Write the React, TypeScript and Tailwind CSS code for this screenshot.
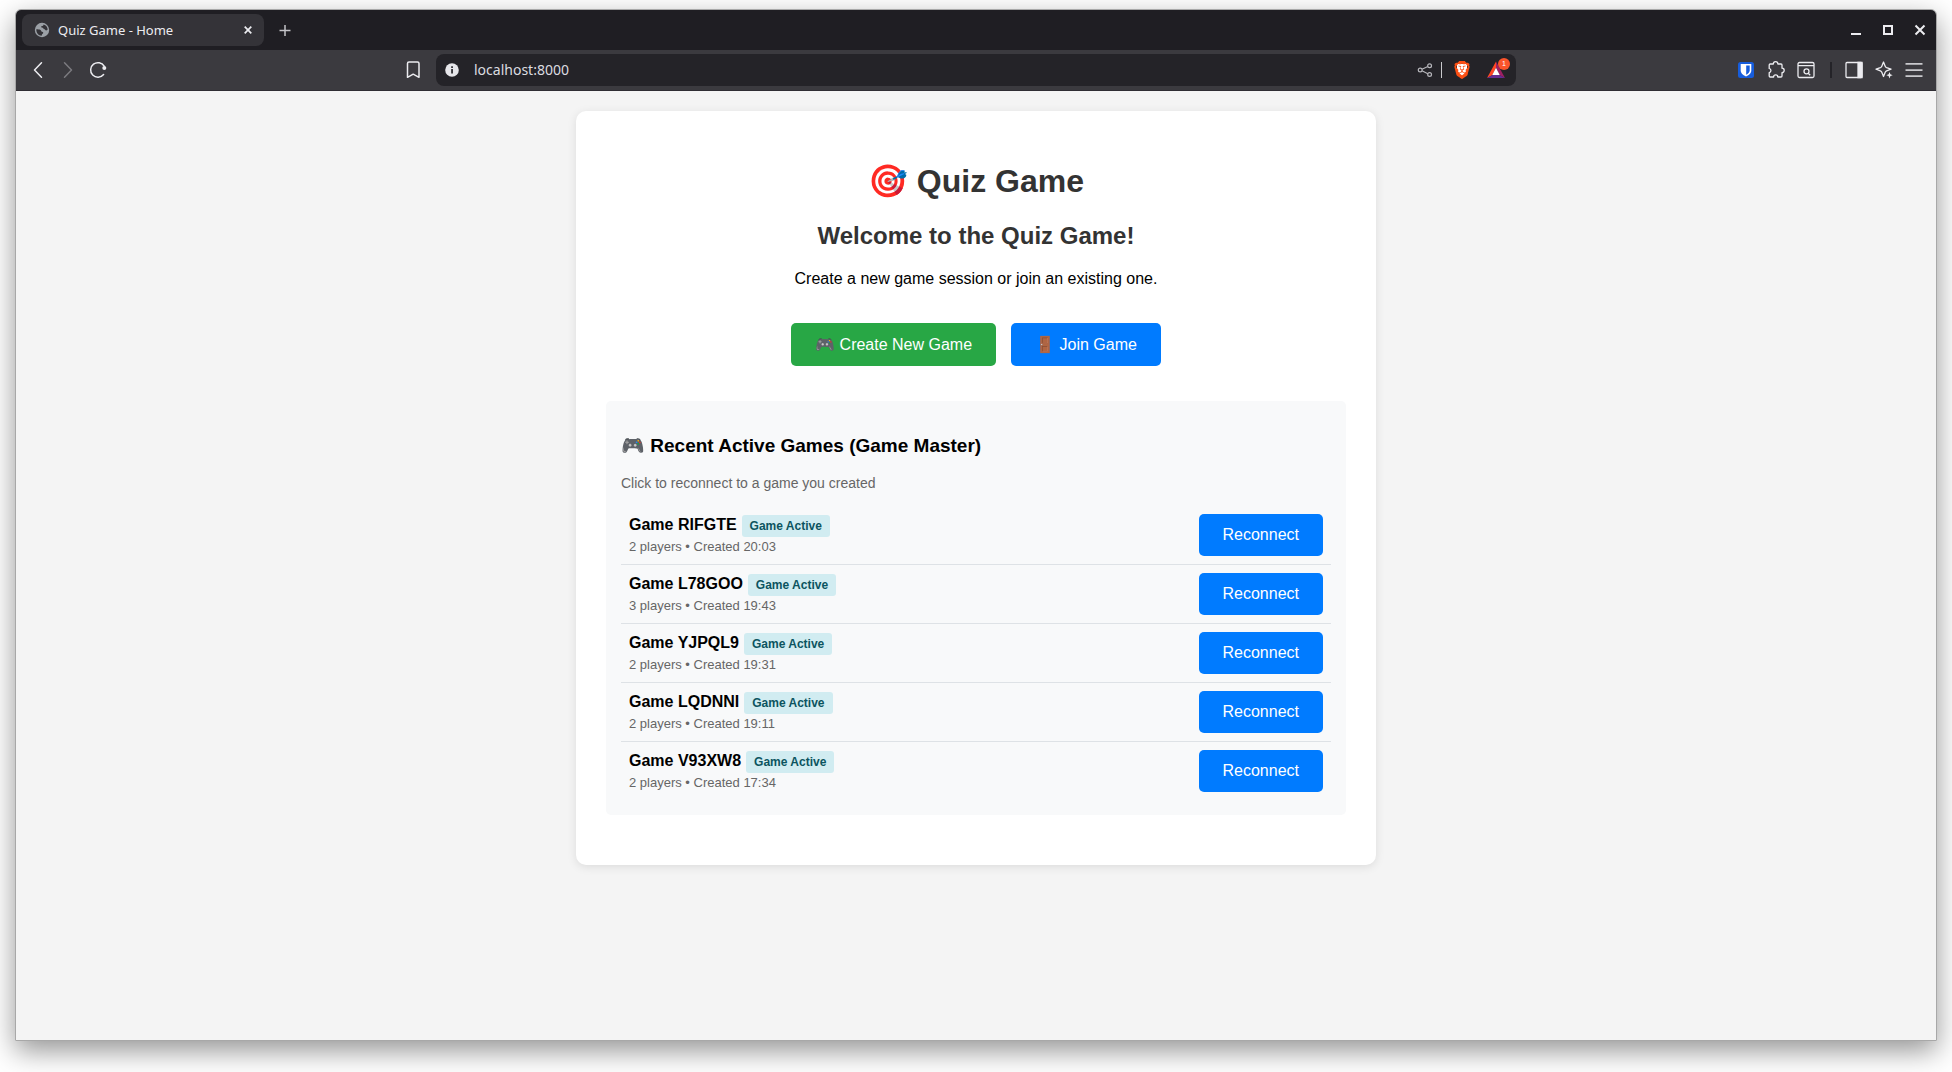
import type { ReactNode } from "react";
import { SiBrave } from "react-icons/si";

const games = [
  { code: "RIFGTE", players: 2, created: "20:03" },
  { code: "L78GOO", players: 3, created: "19:43" },
  { code: "YJPQL9", players: 2, created: "19:31" },
  { code: "LQDNNI", players: 2, created: "19:11" },
  { code: "V93XW8", players: 2, created: "17:34" },
];

function IconButton({ label, children, className = "" }: { label: string; children: ReactNode; className?: string }) {
  return (
    <button type="button" aria-label={label} className={`flex shrink-0 items-center justify-center ${className}`}>
      {children}
    </button>
  );
}

function TabStrip() {
  return (
    <div className="flex h-10 items-center bg-[#1f1e23] px-1.5">
      <div className="flex h-8 w-[242px] items-center rounded-lg bg-[#343338] pr-2 pl-3">
        <svg width="16" height="16" viewBox="0 0 16 16" className="shrink-0">
          <circle cx="8" cy="8" r="7.2" fill="#9ba0a6" />
          <path d="M2.300 7.300c1.700 0 3.200.1 4.200.7.900.6.500 1.500 1.500 1.800 1 .2 1.500.8 1.100 1.500-.4.600-1.300.8-1.400 2.400-3 0-5.500-2.500-5.400-6.400zM9.600 2.400c-.2 1.100-.8 1.400-1.700 1.500-.9.200-.9 1.500.1 1.700 1.100.1 1.100 1.100 2 1.500 1 .4 1.300 1.300 2.200 1.300.8 0 1.100-.4 1.500-.8-.2-2.600-1.700-4.600-4.100-5.200z" fill="#343338" />
        </svg>
        <span className="ml-2 flex-1 truncate font-['Noto_Sans',sans-serif] text-[13px] leading-5 text-[#ececf0]">Quiz Game - Home</span>
        <IconButton label="Close tab" className="size-4 text-[#ececf0]">
          <svg width="16" height="16" viewBox="0 0 16 16" stroke="currentColor" strokeWidth="1.700">
            <path d="M4.700 4.700l6.600 6.600M11.300 4.700l-6.600 6.600" />
          </svg>
        </IconButton>
      </div>
      <IconButton label="New tab" className="ml-3 size-4 text-[#c4c4c8]">
        <svg width="16" height="16" viewBox="0 0 16 16" stroke="currentColor" strokeWidth="1.500">
          <path d="M9 3v11M3.500 8.500h11" />
        </svg>
      </IconButton>
      <div className="ml-auto flex items-center gap-4 pr-0.5 text-[#ececf0]">
        <IconButton label="Minimize" className="size-4">
          <svg width="16" height="16" viewBox="0 0 16 16" fill="currentColor"><path d="M3 11h10v2H3z" /></svg>
        </IconButton>
        <IconButton label="Maximize" className="size-4">
          <svg width="16" height="16" viewBox="0 0 16 16" fill="none" stroke="currentColor" strokeWidth="2"><path d="M4 4h8v8H4z" /></svg>
        </IconButton>
        <IconButton label="Close window" className="size-4">
          <svg width="16" height="16" viewBox="0 0 16 16" stroke="currentColor" strokeWidth="2"><path d="M3.500 3.500l9 9M12.500 3.500l-9 9" /></svg>
        </IconButton>
      </div>
    </div>
  );
}

function Toolbar() {
  return (
    <div className="flex h-[41px] items-center border-b border-[#2f2d33] bg-[#3b3a3f] pr-3 pl-3">
      <div className="flex flex-1 items-center">
        <div className="flex gap-2.5 text-[#ececf0]">
          <IconButton label="Back" className="size-5">
            <svg width="20" height="20" viewBox="0 0 20 20" fill="none" stroke="currentColor" strokeWidth="1.500" strokeLinecap="round" strokeLinejoin="round"><path d="M13.500 2.800L6.500 10l7 7.200" /></svg>
          </IconButton>
          <IconButton label="Forward" className="size-5 text-[#7b7a7f]">
            <svg width="20" height="20" viewBox="0 0 20 20" fill="none" stroke="currentColor" strokeWidth="1.500" strokeLinecap="round" strokeLinejoin="round"><path d="M6.500 2.800l7 7.200-7 7.200" /></svg>
          </IconButton>
          <IconButton label="Reload" className="size-5">
            <svg width="20" height="20" viewBox="0 0 20 20" fill="none" stroke="currentColor" strokeWidth="1.500" strokeLinecap="round"><path d="M15.600 14.600A7.300 7.300 0 1 1 16.200 6.200" /><circle cx="16.300" cy="8" r="2" fill="currentColor" stroke="none" /></svg>
          </IconButton>
        </div>
        <IconButton label="Bookmark this page" className="mr-3 ml-auto size-5 text-[#ececf0]">
          <svg width="20" height="20" viewBox="0 0 20 20" fill="none" stroke="currentColor" strokeWidth="1.500" strokeLinejoin="round"><path d="M5 2h8.500q1.500 0 1.500 1.500V17.300L9.200 14.200 3.500 17.300V3.500Q3.500 2 5 2z" /></svg>
        </IconButton>
      </div>
      <div className="flex h-8 w-[1080px] max-w-[60%] items-center rounded-lg bg-[#242328] pr-2.5 pl-2">
        <IconButton label="Site information" className="size-4">
          <svg width="16" height="16" viewBox="0 0 16 16"><circle cx="8" cy="8" r="6.800" fill="#e6e6ea" /><path d="M7.200 7h1.700v4.500H7.200zM7.200 4.300h1.700v1.600H7.200z" fill="#242328" /></svg>
        </IconButton>
        <input aria-label="Address" defaultValue="localhost:8000" className="ml-3.5 min-w-0 flex-1 bg-transparent font-['Noto_Sans',sans-serif] text-sm text-[#dcdce0] outline-none" />
        <IconButton label="Share" className="size-4 text-[#b5b5ba]">
          <svg width="16" height="16" viewBox="0 0 16 16" fill="none" stroke="currentColor" strokeWidth="1.200"><circle cx="3.200" cy="8" r="1.900" /><circle cx="12.600" cy="3.700" r="1.900" /><circle cx="12.600" cy="12.500" r="1.900" /><path d="M5 7.200l5.800-2.700M5 8.800l5.800 2.900" /></svg>
        </IconButton>
        <div className="ml-2 h-4 w-px bg-[#c9c9cd]" />
        <IconButton label="Brave Shields" className="relative ml-2.5 size-5">
          <span className="absolute h-3 w-2.5 rounded-b-full bg-white" />
          <SiBrave className="relative size-[18px] text-[#fb4f14]" />
        </IconButton>
        <IconButton label="Brave Rewards" className="relative ml-3.5 size-5">
          <svg width="20" height="20" viewBox="0 0 20 20">
            <path d="M10 1.500L1 18l5.500-3L10 7.800z" fill="#ff4724" />
            <path d="M10 1.500L19 18l-5.500-3L10 7.800z" fill="#9e1f63" />
            <path d="M1 18h18l-5.500-3h-7z" fill="#662d91" />
            <path d="M10 7.800L13.700 15H6.300z" fill="#fff" />
          </svg>
          <span className="absolute -top-0.5 -right-1 flex size-3 items-center justify-center rounded-full bg-[#fb542b] text-[7px] text-white">1</span>
        </IconButton>
      </div>
      <div className="flex flex-1 items-center justify-end text-[#ececf0]">
        <IconButton label="Bitwarden" className="size-4">
          <svg width="16" height="16" viewBox="0 0 16 16"><rect width="16" height="16" rx="2.500" fill="#175ddc" /><path d="M2.700 2h10.600v6.500c0 3-3 4.900-5.300 5.900-2.300-1-5.300-2.900-5.300-5.900z" fill="#fff" /><path d="M8.200 3.500h3.500v5c0 1.900-1.900 3.300-3.500 4.200z" fill="#175ddc" /></svg>
        </IconButton>
        <IconButton label="Extensions" className="ml-3 size-5">
          <svg width="20" height="20" viewBox="0 0 20 20" fill="none" stroke="currentColor" strokeWidth="1.300" strokeLinejoin="round"><path d="M7.300 4a2.300 2.300 0 0 1 4.600 0H15q1 0 1 1v3.200a2.200 2.200 0 0 1 0 4.400V16q0 1-1 1h-3.200a2.100 2.100 0 0 0-4.200 0H4.200q-1 0-1-1v-3.300a2.200 2.200 0 0 0 0-4.300V5q0-1 1-1z" /></svg>
        </IconButton>
        <IconButton label="Search tabs" className="ml-2.5 size-5">
          <svg width="20" height="20" viewBox="0 0 20 20" fill="none" stroke="currentColor" strokeWidth="1.300"><rect x="2" y="2.500" width="16" height="15" rx="1.500" /><path d="M2 5.700h16M12.200 13.200l2 2" /><circle cx="10.500" cy="11.300" r="2.500" /></svg>
        </IconButton>
        <div className="ml-3.5 h-4 w-0.5 bg-[#242328]" />
        <IconButton label="Side panel" className="ml-3 size-5">
          <svg width="20" height="20" viewBox="0 0 20 20" fill="none" stroke="currentColor" strokeWidth="1.300"><rect x="2" y="2.500" width="16" height="15" rx="1" /><path d="M14 2.500h4v15h-4z" fill="currentColor" /></svg>
        </IconButton>
        <IconButton label="Leo AI" className="ml-2.5 size-5">
          <svg width="20" height="20" viewBox="0 0 20 20" fill="none" stroke="currentColor" strokeWidth="1.300" strokeLinejoin="round"><path d="M9.500 2l1.700 4.200q.4 1 1.400 1.400L17 9.200l-4.400 1.600q-1 .4-1.400 1.400L9.500 16.500l-1.700-4.300q-.4-1-1.400-1.400L2 9.200l4.400-1.600q1-.4 1.400-1.400z" /><circle cx="15.500" cy="15.200" r="3.200" fill="#3b3a3f" stroke="none" /><path d="M15.500 12l.9 2.300 2.300.9-2.300.9-.9 2.300-.9-2.300-2.300-.9 2.300-.9z" fill="currentColor" stroke="none" /></svg>
        </IconButton>
        <IconButton label="Menu" className="ml-2.5 size-5 text-[#c9c9cd]">
          <svg width="20" height="20" viewBox="0 0 20 20" fill="currentColor"><path d="M1.500 3h17v1.700h-17zM1.500 9.200h17v1.700h-17zM1.500 15.300h17V17h-17z" /></svg>
        </IconButton>
      </div>
    </div>
  );
}

export default function App() {
  return (
    <div className="flex min-h-screen bg-white px-[15px] pt-[9px] pb-[31px] font-['Liberation_Sans',Arial,sans-serif]">
      <div className="flex flex-1 flex-col overflow-hidden rounded-t-md border border-[#a8a8a8] shadow-[0_10px_28px_rgba(0,0,0,0.42)]">
        <TabStrip />
        <Toolbar />
        <main className="flex-1 bg-[#f4f4f4] px-5 py-5">
          <div className="mx-auto max-w-[800px] rounded-[10px] bg-white px-[30px] pt-[51px] pb-[50px] text-black shadow-[0_2px_10px_rgba(0,0,0,0.1)]">
            <header className="text-center">
              <h1 className="text-[32px] leading-[38px] font-bold text-[#333]">🎯 Quiz Game</h1>
              <h2 className="mt-[22px] text-2xl leading-7 font-bold text-[#333]">Welcome to the Quiz Game!</h2>
              <p className="mt-5 text-base leading-[18px]">Create a new game session or join an existing one.</p>
            </header>
            <div className="mt-[35px] flex flex-wrap justify-center gap-[15px]">
              <button type="button" className="rounded-[5px] bg-[#28a745] px-6 py-3 text-base leading-[19px] text-white">🎮 Create New Game</button>
              <button type="button" className="rounded-[5px] bg-[#007bff] px-6 py-3 text-base leading-[19px] text-white">🚪 Join Game</button>
            </div>
            <section className="mt-[35px] rounded-[5px] bg-[#f8f9fa] px-[15px] pt-[34px] pb-[15px]">
              <h3 className="text-[19px] leading-[22px] font-bold">🎮 Recent Active Games (Game Master)</h3>
              <p className="mt-[18px] text-sm leading-4 text-[#666]">Click to reconnect to a game you created</p>
              <ul className="mt-[15px] divide-y divide-[#dee2e6]">
                {games.map((game) => (
                  <li key={game.code} className="flex items-center justify-between p-2">
                    <div>
                      <div className="flex items-baseline gap-[5px]">
                        <strong className="text-base leading-[18px]">Game {game.code}</strong>
                        <span className="rounded-[3px] bg-[#d1ecf1] px-2 py-1 text-xs leading-[14px] font-bold text-[#0c5460]">Game Active</span>
                      </div>
                      <div className="mt-0.5 text-[13px] leading-4 text-[#666]">
                        {game.players} players • Created {game.created}
                      </div>
                    </div>
                    <button type="button" className="rounded-[5px] bg-[#007bff] px-6 py-3 text-base leading-[18px] text-white">Reconnect</button>
                  </li>
                ))}
              </ul>
            </section>
          </div>
        </main>
      </div>
    </div>
  );
}
